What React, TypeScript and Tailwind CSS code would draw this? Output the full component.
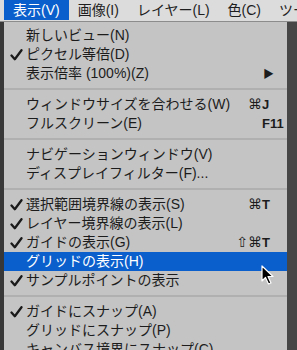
import React from "react"

type Item = {
  label?: string
  checked?: boolean
  mods?: string
  keyName?: string
  submenu?: boolean
  active?: boolean
  sep?: boolean
}

const items: Item[] = [
  { label: "新しいビュー(N)" },
  { label: "ピクセル等倍(D)", checked: true },
  { label: "表示倍率 (100%)(Z)", submenu: true },
  { sep: true },
  { label: "ウィンドウサイズを合わせる(W)", mods: "⌘", keyName: "J" },
  { label: "フルスクリーン(E)", keyName: "F11" },
  { sep: true },
  { label: "ナビゲーションウィンドウ(V)" },
  { label: "ディスプレイフィルター(F)..." },
  { sep: true },
  { label: "選択範囲境界線の表示(S)", checked: true, mods: "⌘", keyName: "T" },
  { label: "レイヤー境界線の表示(L)", checked: true },
  { label: "ガイドの表示(G)", checked: true, mods: "⇧⌘", keyName: "T" },
  { label: "グリッドの表示(H)", active: true },
  { label: "サンプルポイントの表示", checked: true },
  { sep: true },
  { label: "ガイドにスナップ(A)", checked: true },
  { label: "グリッドにスナップ(P)" },
  { label: "キャンバス境界にスナップ(C)" },
]

const bar = ["表示(V)", "画像(I)", "レイヤー(L)", "色(C)", "ツール(T)"]

function Check() {
  return (
    <svg width="13" height="12" viewBox="0 0 13 12">
      <path d="M1.5 6.5 L4.8 10.2 L11.5 1.2" fill="none" stroke="#1a1a1a" strokeWidth="2.3" strokeLinecap="round" strokeLinejoin="round" />
    </svg>
  )
}

function MenuRow({ item }: { item: Item }) {
  if (item.sep) {
    return (
      <div className="h-[12px] flex items-center">
        <div className="h-[2px] w-full bg-[#b0b0b0]" />
      </div>
    )
  }
  const color = item.active ? "bg-[#0b5fcc] text-white" : "text-[#1c1c1c]"
  return (
    <div className={`flex h-[19px] items-center leading-[19px] ${color}`}>
      <div className="flex w-[22px] items-center pl-[6px]">
        {item.checked && <Check />}
      </div>
      <div className="flex-1 whitespace-nowrap">{item.label}</div>
      <div className="text-right text-[14px] font-['DejaVu_Sans',sans-serif]">
        {item.mods}
      </div>
      <div className="w-[25px] pr-[4px] text-[13px] font-bold">
        {item.submenu ? <span className="text-[11px] pl-[1px]">▶</span> : item.keyName}
      </div>
    </div>
  )
}

export default function App() {
  return (
    <div className="relative h-[350px] w-[297px] overflow-hidden bg-[#3d3d3d] text-[14px] font-['Liberation_Sans','Noto_Sans_CJK_JP',sans-serif]">
      {/* menu bar */}
      <div className="flex h-[22px] items-start border-b border-[#8c8c8c] bg-[#dcdcdc] pl-[4px] text-[#1e1e1e]">
        {bar.map((b, i) => (
          <div
            key={b}
            className={`h-[20px] whitespace-nowrap px-[9px] leading-[20px] ${i === 0 ? "bg-[#0b5fcc] text-white" : ""}`}
          >
            {b}
          </div>
        ))}
      </div>

      <div className="flex">
        <div className="w-[4px] bg-[#383838]" />
        <div className="flex-1 bg-[#c4c4c4] pt-[4px]">
          {items.map((it, i) => (
            <MenuRow key={i} item={it} />
          ))}
        </div>
        <div className="w-[10px] bg-[#464646]" />
      </div>

      {/* mouse pointer */}
      <svg className="absolute left-[261px] top-[265px]" width="14" height="21" viewBox="0 0 14 21">
        <path
          d="M1 1 L1 16 L4.5 12.5 L7.5 19 L10 18 L7 11.5 L12 11.5 Z"
          fill="#000"
          stroke="#fff"
          strokeWidth="1.2"
          strokeLinejoin="round"
        />
      </svg>
    </div>
  )
}
